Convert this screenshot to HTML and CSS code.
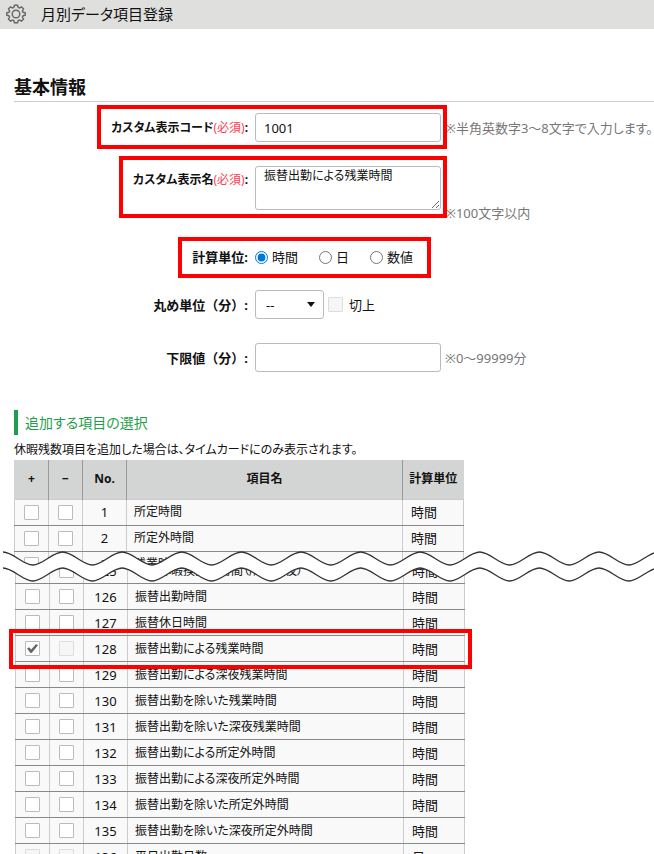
FILE: index.html
```
<!DOCTYPE html>
<html lang="ja">
<head>
    <meta charset="UTF-8">
    <meta name="viewport" content="width=device-width, initial-scale=1.0">
    <title>月別データ項目登録</title>
    <link rel="stylesheet" href="styles.css">
</head>
<body>
    <header class="page-header">
        <svg class="gear" width="20" height="20" viewBox="0 0 20 20" fill="none" stroke="#666" stroke-width="1.4" stroke-linejoin="round">
            <path d="M8.4 1.2h3.2l.5 2.2 1.4.6 1.9-1.2 2.2 2.2-1.2 1.9.6 1.4 2.2.5v2.4l-2.2.5-.6 1.4 1.2 1.9-2.2 2.2-1.9-1.2-1.4.6-.5 2.2H8.4l-.5-2.2-1.4-.6-1.9 1.2-2.2-2.2 1.2-1.9-.6-1.4-2.2-.5V8.8l2.2-.5.6-1.4-1.2-1.9 2.2-2.2 1.9 1.2 1.4-.6z"/>
            <circle cx="10" cy="10" r="3.8"/>
        </svg>
        <h1>月別データ項目登録</h1>
    </header>

    <main class="content">
        <h2 class="section-title">基本情報</h2>
        <form class="form">
            <div class="form-row">
                <div class="field marked">
                    <label class="label-small" for="code">カスタム表示コード<span class="required">(必須)</span>:</label>
                    <div class="control"><input class="text-input" type="text" id="code" value="1001"></div>
                </div>
                <span class="hint">※半角英数字3～8文字で入力します。</span>
            </div>
            <div class="form-row">
                <div class="field field-top marked marked-tall">
                    <label class="label-small" for="name">カスタム表示名<span class="required">(必須)</span>:</label>
                    <div class="control"><textarea class="text-input" id="name">振替出勤による残業時間</textarea></div>
                </div>
                <span class="hint hint-bottom">※100文字以内</span>
            </div>
            <div class="form-row form-row-unit">
                <div class="field marked marked-unit" role="radiogroup" aria-labelledby="unit-label">
                    <span class="label" id="unit-label">計算単位:</span>
                    <div class="control unit-list">
                        <label><input type="radio" name="unit" checked>時間</label>
                        <label><input type="radio" name="unit">日</label>
                        <label><input type="radio" name="unit">数値</label>
                    </div>
                </div>
            </div>
            <div class="form-row">
                <div class="field">
                    <label class="label-wide" for="round">丸め単位（分）:</label>
                    <div class="control round-list">
                        <span class="select">
                            <select id="round">
                                <option>--</option>
                            </select>
                        </span>
                        <label><input class="check" type="checkbox" disabled>切上</label>
                    </div>
                </div>
            </div>
            <div class="form-row">
                <div class="field">
                    <label class="label-wide" for="lower">下限値（分）:</label>
                    <div class="control"><input class="text-input" type="text" id="lower"></div>
                </div>
                <span class="hint">※0～99999分</span>
            </div>
        </form>

        <h3 class="sub-title">追加する項目の選択</h3>
        <p class="note">休暇残数項目を追加した場合は、タイムカードにのみ表示されます。</p>

        <div class="items">
            <div class="items-head">
                <table class="item-table">
                    <colgroup><col class="col-check"><col class="col-check"><col class="col-no"><col><col class="col-unit"></colgroup>
                    <thead>
                        <tr><th>+</th><th>−</th><th>No.</th><th>項目名</th><th>計算単位</th></tr>
                    </thead>
                    <tbody>
                        <tr><td><input class="check" type="checkbox" aria-label="1 +"></td><td><input class="check" type="checkbox" aria-label="1 −"></td><td>1</td><td>所定時間</td><td>時間</td></tr>
                        <tr><td><input class="check" type="checkbox" aria-label="2 +"></td><td><input class="check" type="checkbox" aria-label="2 −"></td><td>2</td><td>所定外時間</td><td>時間</td></tr>
                        <tr><td><input class="check" type="checkbox" aria-label="3 +"></td><td><input class="check" type="checkbox" aria-label="3 −"></td><td>3</td><td>残業時間</td><td>時間</td></tr>
                    </tbody>
                </table>
            </div>
            <!-- 省略を示す波線 -->
            <svg class="wave" height="34" aria-hidden="true">
                <path fill="#fff" d="M0 3c10 0 19.8 13 29.8 13s19.8-13 29.8-13 19.8 13 29.8 13 19.8-13 29.8-13 19.8 13 29.8 13 19.8-13 29.8-13 19.8 13 29.8 13 19.8-13 29.8-13 19.8 13 29.8 13 19.8-13 29.8-13 19.8 13 29.8 13 19.8-13 29.8-13 19.8 13 29.8 13 19.8-13 29.8-13 19.8 13 29.8 13 19.8-13 29.8-13 19.8 13 29.8 13 19.8-13 29.8-13 19.8 13 29.8 13 19.8-13 29.8-13 19.8 13 29.8 13 19.8-13 29.8-13v16c-10 0-19.8 13-29.8 13s-19.8-13-29.8-13-19.8 13-29.8 13-19.8-13-29.8-13-19.8 13-29.8 13-19.8-13-29.8-13-19.8 13-29.8 13-19.8-13-29.8-13-19.8 13-29.8 13-19.8-13-29.8-13-19.8 13-29.8 13-19.8-13-29.8-13-19.8 13-29.8 13-19.8-13-29.8-13-19.8 13-29.8 13-19.8-13-29.8-13-19.8 13-29.8 13-19.8-13-29.8-13-19.8 13-29.8 13-19.8-13-29.8-13-19.8 13-29.8 13-19.8-13-29.8-13z"/>
                <path id="line" fill="none" stroke="#333" stroke-width="1.3" d="M0 3c10 0 19.8 13 29.8 13s19.8-13 29.8-13 19.8 13 29.8 13 19.8-13 29.8-13 19.8 13 29.8 13 19.8-13 29.8-13 19.8 13 29.8 13 19.8-13 29.8-13 19.8 13 29.8 13 19.8-13 29.8-13 19.8 13 29.8 13 19.8-13 29.8-13 19.8 13 29.8 13 19.8-13 29.8-13 19.8 13 29.8 13 19.8-13 29.8-13 19.8 13 29.8 13 19.8-13 29.8-13 19.8 13 29.8 13 19.8-13 29.8-13 19.8 13 29.8 13 19.8-13 29.8-13"/>
                <use href="#line" y="16"/>
            </svg>
            <div class="items-rest">
                <table class="item-table">
                    <colgroup><col class="col-check"><col class="col-check"><col class="col-no"><col><col class="col-unit"></colgroup>
                    <tbody>
                        <tr><td><input class="check" type="checkbox" aria-label="125 +"></td><td><input class="check" type="checkbox" aria-label="125 −"></td><td>125</td><td>有給休暇換算残時間（所定深夜）</td><td>時間</td></tr>
                        <tr><td><input class="check" type="checkbox" aria-label="126 +"></td><td><input class="check" type="checkbox" aria-label="126 −"></td><td>126</td><td>振替出勤時間</td><td>時間</td></tr>
                        <tr><td><input class="check" type="checkbox" aria-label="127 +"></td><td><input class="check" type="checkbox" aria-label="127 −"></td><td>127</td><td>振替休日時間</td><td>時間</td></tr>
                        <tr class="row-marked"><td><input class="check" type="checkbox" aria-label="128 +" checked></td><td><input class="check" type="checkbox" aria-label="128 −" disabled></td><td>128</td><td>振替出勤による残業時間</td><td>時間</td></tr>
                        <tr><td><input class="check" type="checkbox" aria-label="129 +"></td><td><input class="check" type="checkbox" aria-label="129 −"></td><td>129</td><td>振替出勤による深夜残業時間</td><td>時間</td></tr>
                        <tr><td><input class="check" type="checkbox" aria-label="130 +"></td><td><input class="check" type="checkbox" aria-label="130 −"></td><td>130</td><td>振替出勤を除いた残業時間</td><td>時間</td></tr>
                        <tr><td><input class="check" type="checkbox" aria-label="131 +"></td><td><input class="check" type="checkbox" aria-label="131 −"></td><td>131</td><td>振替出勤を除いた深夜残業時間</td><td>時間</td></tr>
                        <tr><td><input class="check" type="checkbox" aria-label="132 +"></td><td><input class="check" type="checkbox" aria-label="132 −"></td><td>132</td><td>振替出勤による所定外時間</td><td>時間</td></tr>
                        <tr><td><input class="check" type="checkbox" aria-label="133 +"></td><td><input class="check" type="checkbox" aria-label="133 −"></td><td>133</td><td>振替出勤による深夜所定外時間</td><td>時間</td></tr>
                        <tr><td><input class="check" type="checkbox" aria-label="134 +"></td><td><input class="check" type="checkbox" aria-label="134 −"></td><td>134</td><td>振替出勤を除いた所定外時間</td><td>時間</td></tr>
                        <tr><td><input class="check" type="checkbox" aria-label="135 +"></td><td><input class="check" type="checkbox" aria-label="135 −"></td><td>135</td><td>振替出勤を除いた深夜所定外時間</td><td>時間</td></tr>
                        <tr><td><input class="check" type="checkbox" aria-label="136 +" disabled></td><td><input class="check" type="checkbox" aria-label="136 −" disabled></td><td>136</td><td>平日出勤日数</td><td>日</td></tr>
                    </tbody>
                </table>
            </div>
        </div>
    </main>
</body>
</html>
```
FILE: styles.css
```
* {
    box-sizing: border-box;
}
body {
    margin: 0;
    height: 100vh;
    overflow: hidden;
    background-color: #fff;
    color: #111;
    font-family: "Noto Sans", "Noto Sans CJK JP", sans-serif;
    font-size: 13px;
    line-height: 18px;
    font-feature-settings: "palt";
}
input, select, textarea {
    margin: 0;
    font: inherit;
    color: inherit;
    font-feature-settings: inherit;
}
.page-header {
    display: flex;
    align-items: center;
    gap: 15px;
    height: 29px;
    padding: 0 6px 2px;
    background-color: #dfdfde;
}
.page-header h1 {
    margin: 0;
    font-size: 15px;
    font-weight: normal;
}
.content {
    padding: 46px 0 0 14px;
}
.section-title {
    margin: 0 0 11px;
    padding-bottom: 2px;
    border-bottom: 1px solid #ccc;
    font-size: 18px;
    line-height: 24px;
}
.form {
    display: flex;
    flex-direction: column;
    gap: 24px;
}
.form-row {
    display: grid;
    grid-template-columns: 427px 1fr;
    column-gap: 4px;
    align-items: center;
}
.form-row-unit {
    padding-top: 14px;
}
.field {
    position: relative;
    display: flex;
    justify-self: end;
    align-items: center;
    gap: 7px;
}
.field > label, .label {
    font-weight: bold;
    white-space: nowrap;
}
.field > .label-small {
    font-size: 12px;
}
.field > .label-wide {
    font-feature-settings: normal;
}
.field-top {
    align-items: flex-start;
}
.field-top > label {
    padding-top: 5px;
}
.required {
    color: #ff4054;
    font-weight: normal;
}
.control {
    display: flex;
    width: 186px;
}
.text-input {
    display: block;
    width: 100%;
    height: 29px;
    padding: 0 8px;
    border: 1px solid #bbb;
    border-radius: 3px;
    background-color: #fff;
}
textarea.text-input {
    height: 44px;
    font-size: 12px;
    resize: vertical;
}
.hint {
    color: #777;
    white-space: nowrap;
}
.hint-bottom {
    align-self: end;
    margin-bottom: -12px;
}
/* 赤枠 */
.marked::after {
    content: "";
    position: absolute;
    inset: -8px -6px -7px -14px;
    border: 4px solid #f00;
    pointer-events: none;
}
.marked-tall::after {
    inset: -10px -6px -8px -14px;
}
.marked-unit::after {
    inset: -11px 10px -12px -14px;
}
.unit-list {
    gap: 21px;
}
.unit-list label {
    display: flex;
    align-items: center;
    gap: 4px;
}
.unit-list input {
    width: 13px;
    height: 13px;
    accent-color: #0078d7;
}
.round-list {
    gap: 4px;
    align-items: center;
}
.round-list label {
    display: flex;
    align-items: center;
    gap: 6px;
}
.select {
    position: relative;
}
.select select {
    display: block;
    width: 69px;
    height: 29px;
    padding: 0 10px;
    border: 1px solid #bbb;
    border-radius: 3px;
    background-color: #fff;
    appearance: none;
}
.select::after {
    content: "";
    position: absolute;
    top: 12px;
    right: 9px;
    border: 4px solid transparent;
    border-top: 5px solid #111;
    border-bottom: none;
    pointer-events: none;
}
.sub-title {
    margin: 38px 0 6px;
    padding-left: 7px;
    border-left: 4px solid #1f9f4b;
    color: #1f9f4b;
    font-size: 14px;
    font-weight: normal;
    line-height: 25px;
}
.note {
    margin: 0 0 1px;
    font-size: 12px;
}
.items {
    position: relative;
}
.items-head {
    height: 107px;
    overflow: hidden;
}
/* 先頭行は下半分だけ見せる */
.items-rest {
    margin-left: 1px;
    display: flow-root;
    clip-path: inset(0 -20px);
}
.items-rest .item-table {
    margin-top: -10px;
}
.wave {
    position: absolute;
    z-index: 1;
    top: 89px;
    left: -11px;
    width: calc(100% + 11px);
}
.item-table {
    width: 450px;
    border-collapse: collapse;
    table-layout: fixed;
}
.col-check {
    width: 34px;
}
.col-no {
    width: 44px;
}
.col-unit {
    width: 61px;
}
.item-table th {
    height: 39px;
    padding: 0;
    border-left: 1px solid #999;
    background-color: #d3d4d4;
    font-size: 12px;
}
.item-table th:first-child {
    border-left-color: #d3d4d4;
}
.item-table td {
    height: 26px;
    padding: 0 8px;
    border: 1px solid #ccc;
    border-bottom-color: #888;
    background-color: #f9f9f9;
    white-space: nowrap;
}
.item-table td:nth-child(-n+3) {
    padding: 0;
    text-align: center;
}
.item-table td:nth-child(4) {
    padding-left: 7px;
    font-size: 12px;
}
.check {
    display: grid;
    place-items: center;
    width: 15px;
    height: 15px;
    border: 1px solid #bbb;
    border-radius: 1px;
    background-color: #fff;
    appearance: none;
}
td .check {
    margin: 0 auto;
}
.check:disabled {
    border-color: #ddd;
    background-color: #f6f6f6;
}
.check:checked::before {
    content: "";
    width: 11px;
    height: 9px;
    background-color: #666;
    clip-path: polygon(0 50%, 20% 35%, 38% 60%, 82% 0, 100% 14%, 42% 100%, 32% 100%);
}
.row-marked {
    outline: 4px solid #f00;
    outline-offset: 3px;
}
```
